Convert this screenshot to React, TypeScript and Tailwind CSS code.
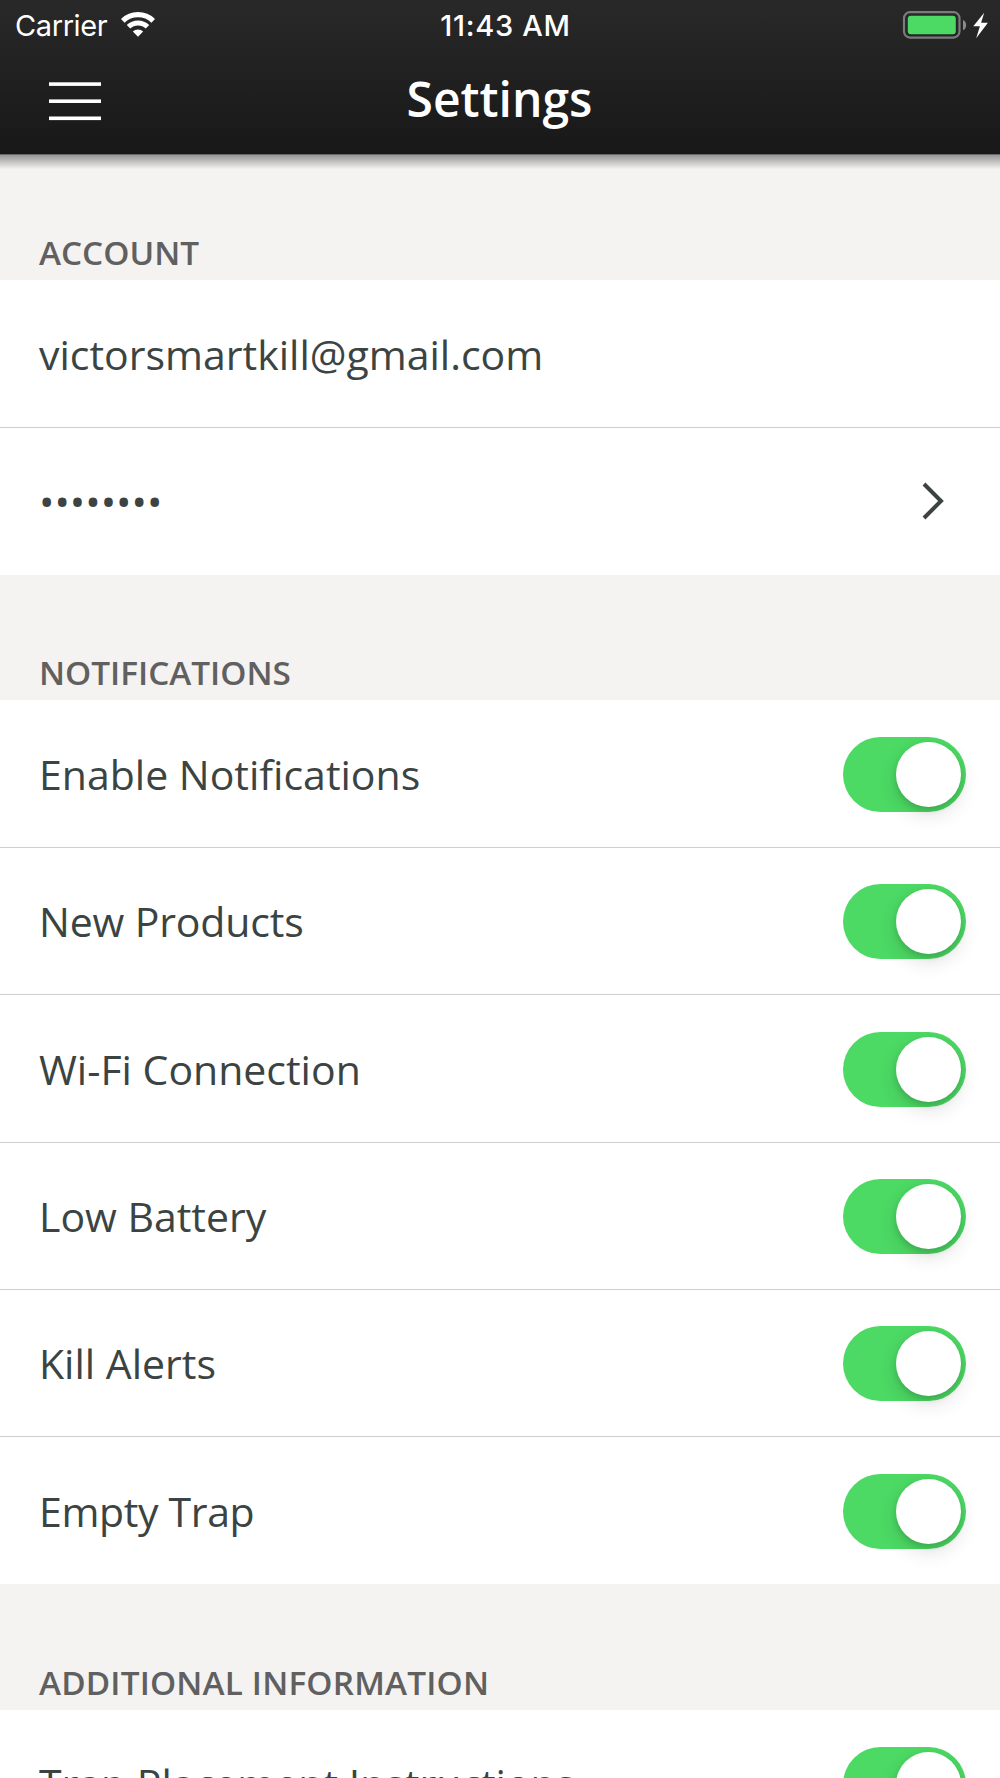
import React from "react";

function Switch() {
  return (
    <div className="mt-px flex h-[75px] w-[123px] shrink-0 items-center justify-end rounded-full bg-[#4cd964] pr-[5px]">
      <div className="h-[65px] w-[65px] rounded-full bg-white shadow-[0_8px_20px_rgba(0,0,0,0.12),0_3px_6px_rgba(0,0,0,0.14)]" />
    </div>
  );
}

function SectionTitle({ children, className = "h-[125.67px]" }: { children: string; className?: string }) {
  return (
    <h2
      className={
        "flex items-end px-[39px] pb-[6px] text-[33.3px] leading-[43px] font-semibold text-[#606060] " + className
      }
    >
      <span>{children}</span>
    </h2>
  );
}

function Row({
  label,
  first,
  labelClass = "",
  className = "h-[147.33px]",
  children,
}: {
  label: string;
  first?: boolean;
  labelClass?: string;
  className?: string;
  children?: React.ReactNode;
}) {
  return (
    <div
      className={
        "flex items-center justify-between bg-white pr-[34px] pl-[39px] " +
        (first ? "pt-px " : "border-t border-[#cfcfd2] ") +
        className
      }
    >
      <span className={"text-[41px] leading-[58px] whitespace-nowrap text-[#3b4442] " + labelClass}>{label}</span>
      {children}
    </div>
  );
}

export default function App() {
  return (
    <div className="h-[1778px] w-[1000px] overflow-hidden bg-[#f4f3f1] font-['Open_Sans',sans-serif]">
      <header className="h-[154px] bg-linear-to-b from-[#292929] to-[#181818] text-white">
        <div className="grid h-[50px] grid-cols-[1fr_auto_1fr] items-center pr-[12px] pl-[15px] font-['Inter',sans-serif] text-[29px] leading-[50px]">
          <div className="flex items-center">
            <span className="w-[93px] pt-px tracking-[-0.4px]">Carrier</span>
            <svg className="mb-[2px] ml-[13px] h-[25px] w-[34px]" viewBox="0 0 34 25" fill="none">
              <path d="M1.800 8.800a22 22 0 0 1 30.400 0" stroke="white" strokeWidth="5.2" />
              <path d="M7.500 14.800a13.700 13.700 0 0 1 19 0" stroke="white" strokeWidth="5" />
              <path d="M17 24.800l-5.200-5.300a7.500 7.500 0 0 1 10.400 0z" fill="white" />
            </svg>
          </div>
          <span className="pl-[8px] font-medium tracking-[0.7px]">11:43 AM</span>
          <svg className="mb-[2px] h-[28px] w-[86px] justify-self-end" viewBox="0 0 86 28">
            <rect x="2" y="1.2" width="55.5" height="25.4" rx="6" fill="none" stroke="#7b7b7b" strokeWidth="2.2" />
            <rect x="5.8" y="4.8" width="48" height="18.4" rx="3" fill="#4cd964" />
            <path d="M61 9c4.200 1.400 4.200 8.800 0 10.200z" fill="#8b8b8b" />
            <path d="M82.200 1.800L71.300 15.200h6.600L74.200 27.300 85.900 11.800h-6.800z" fill="white" />
          </svg>
        </div>
        <div className="grid h-[101px] grid-cols-[1fr_auto_1fr] items-center pr-[50px] pl-[49px]">
          <svg className="h-[40px] w-[52px]" viewBox="0 0 52 40" fill="white">
            <rect x="0" y="1.3" width="52" height="3.6" />
            <rect x="0" y="18.4" width="52" height="3.6" />
            <rect x="0" y="35.5" width="52" height="3.6" />
          </svg>
          <h1 className="pb-[5px] text-[48px] leading-[65px] font-semibold">Settings</h1>
        </div>
      </header>
      <div className="h-[15px] border-t border-[#6a696a] bg-linear-to-b from-[#979596] to-[#f4f3f1]" />
      <main className="-mt-[14.67px]">
        <SectionTitle>ACCOUNT</SectionTitle>
        <Row label="victorsmartkill@gmail.com" first />
        <Row label="••••••••">
          <svg className="mr-[22.500px] h-[38px] w-[22px]" viewBox="0 0 22 38" fill="none">
            <path d="M2 2l17 17L2 36" stroke="#3b4442" strokeWidth="4" />
          </svg>
        </Row>
        <SectionTitle className="h-[125.1px]">NOTIFICATIONS</SectionTitle>
        <Row label="Enable Notifications" first>
          <Switch />
        </Row>
        <Row label="New Products" labelClass="tracking-[-0.15px]">
          <Switch />
        </Row>
        <Row label="Wi-Fi Connection">
          <Switch />
        </Row>
        <Row label="Low Battery">
          <Switch />
        </Row>
        <Row label="Kill Alerts">
          <Switch />
        </Row>
        <Row label="Empty Trap" labelClass="tracking-[-0.35px]" className="h-[148px]">
          <Switch />
        </Row>
        <SectionTitle className="h-[125.67px] tracking-[0.17px]">ADDITIONAL INFORMATION</SectionTitle>
        <Row label="Trap Placement Instructions" labelClass="pb-[3px]" first>
          <Switch />
        </Row>
      </main>
    </div>
  );
}
